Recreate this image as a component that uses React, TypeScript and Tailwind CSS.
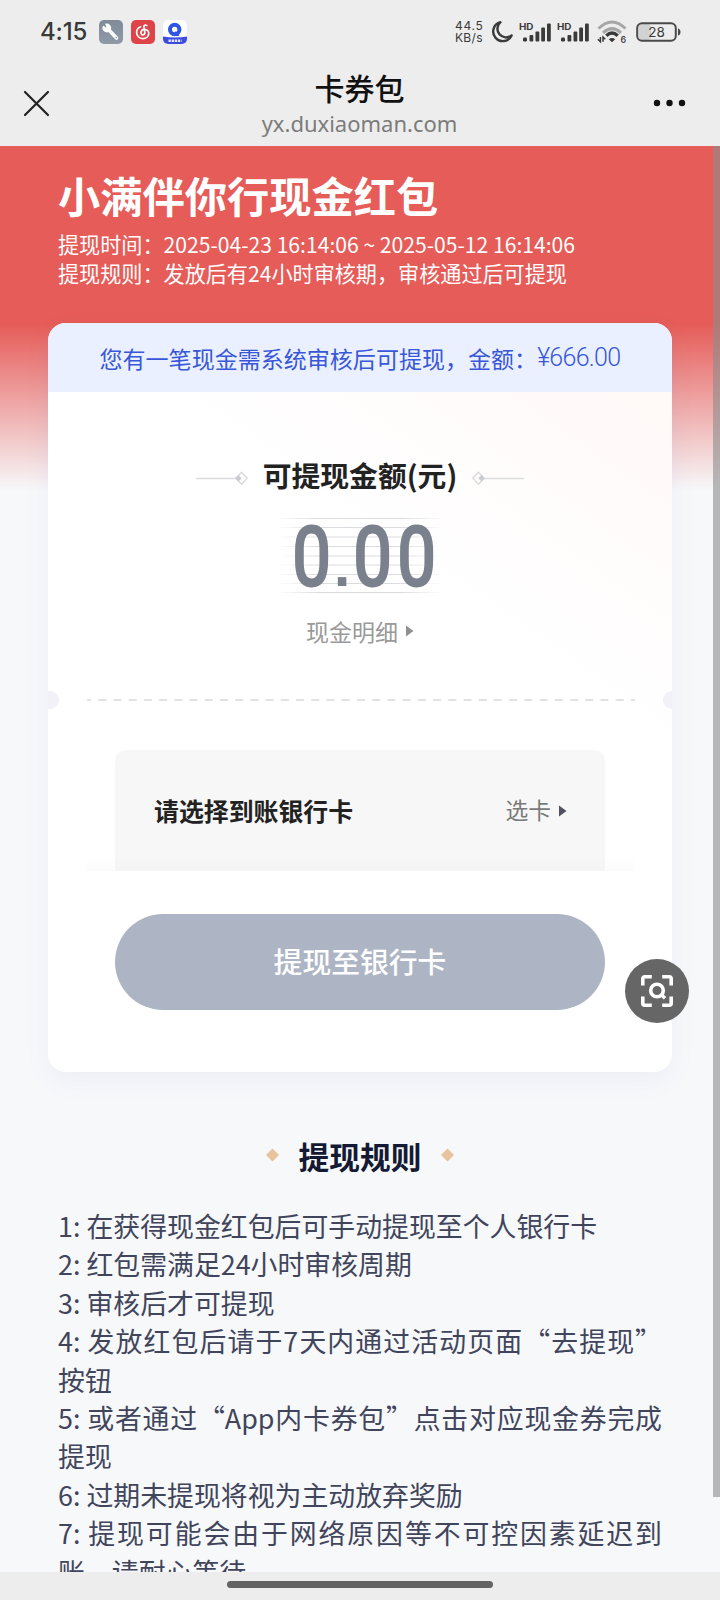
import React from "react";

const CJK = "font-['Noto_Sans_CJK_SC',sans-serif]";

function WrenchIcon() {
  return (
    <svg width="24" height="24" viewBox="0 0 24 24">
      <defs>
        <linearGradient id="wr" x1="0" y1="0" x2="0" y2="1">
          <stop offset="0" stopColor="#7f8b98" />
          <stop offset="1" stopColor="#8f9aa8" />
        </linearGradient>
      </defs>
      <rect width="24" height="24" rx="5" fill="url(#wr)" />
      <path d="M8.5 8.5 17.5 18" stroke="#fff" strokeWidth="3.6" strokeLinecap="round" />
      <circle cx="7.8" cy="8" r="4.4" fill="#fff" />
      <path d="M7.6 7.8 3.2 5 5.6 2.4Z" fill="#828e9b" />
      <circle cx="17.3" cy="17.6" r="0.8" fill="#8f9aa8" />
    </svg>
  );
}

function MusicIcon() {
  return (
    <svg width="24" height="24" viewBox="0 0 24 24">
      <rect width="24" height="24" rx="5" fill="#dd4347" />
      <path
        d="M15.800 5.600c-1.500-1.100-3.200-.4-2.900 1.500l.9 5c.3 1.800-.8 2.800-2 2.700-1.400-.1-2.100-1.300-1.800-2.700.5-2 2.500-3 4.400-2.600 2.400.6 3.600 2.500 3.300 4.600-.4 2.800-2.900 4.600-5.800 4.500-3.600-.1-6.400-2.700-6.300-6.300.1-2.600 1.600-4.600 4-5.500"
        fill="none"
        stroke="#fff"
        strokeWidth="1.700"
        strokeLinecap="round"
      />
    </svg>
  );
}

function BrowserIcon() {
  return (
    <svg width="24" height="24" viewBox="0 0 24 24">
      <defs>
        <clipPath id="br">
          <rect width="24" height="24" rx="5" />
        </clipPath>
      </defs>
      <g clipPath="url(#br)">
        <rect width="24" height="24" fill="#fff" />
        <path d="M0 16.500Q12 18.500 24 16.500V24H0Z" fill="#3b4ce0" />
        <circle cx="11.700" cy="9.500" r="4.700" fill="none" stroke="#2f55e6" strokeWidth="4" />
        <path d="M12 11l4.500 5H12Z" fill="#2f55e6" />
        <path d="M5.500 20.700h13" stroke="#fff" strokeWidth="2.600" strokeDasharray="2.400 .7" opacity=".85" />
      </g>
    </svg>
  );
}

function Signal() {
  return (
    <svg width="33" height="24" viewBox="0 -2 33 24">
      <text x="0" y="7.600" fontSize="8.600" fontWeight="700" fill="#3a3a3a" textLength="14.500" lengthAdjust="spacingAndGlyphs" fontFamily="Inter, sans-serif">HD</text>
      <g fill="#3a3a3a">
        <rect x="4" y="15.500" width="4" height="4" rx="1.200" />
        <rect x="10.500" y="13" width="3.800" height="6.500" rx="1" />
        <rect x="16.500" y="9.500" width="3.800" height="10" rx="1" />
        <rect x="22.200" y="5.500" width="3.800" height="14" rx="1" />
        <rect x="28" y="1.500" width="3.800" height="18" rx="1" />
      </g>
    </svg>
  );
}

function Wifi() {
  return (
    <svg width="30" height="24" viewBox="0 0 30 24">
      <g fill="none" strokeWidth="3">
        <path d="M1.500 8.500Q15-4.500 28.500 8.500" stroke="#a6a6a6" />
        <path d="M6 12.800Q15 4.500 24 12.800" stroke="#a6a6a6" />
        <path d="M9.300 15.800Q15 10.200 20.700 15.800" stroke="#3a3a3a" strokeWidth="3.400" />
      </g>
      <path d="M11.800 19.300Q15 16.800 18.200 19.300L15 22.200Z" fill="#3a3a3a" />
      <path d="M3.400 17v4.700L.8 19.300M6 21.700V17l2.300 2.200" stroke="#3a3a3a" strokeWidth="1.500" fill="none" />
      <text x="23.500" y="22.500" fontSize="9" fontWeight="500" fill="#3a3a3a" fontFamily="Inter, sans-serif">6</text>
    </svg>
  );
}

function StatusBar() {
  return (
    <div className="flex h-[63px] items-center pl-[40px] pr-[38px] text-[#3a3a3a]">
      <span className="w-[59px] font-['Inter',sans-serif] text-[24px] font-medium leading-none tracking-[-0.2px]">4:15</span>
      <div className="flex gap-2">
        <WrenchIcon />
        <MusicIcon />
        <BrowserIcon />
      </div>
      <div className="ml-auto flex items-center">
        <div className="w-[35px] font-['Inter',sans-serif] text-[12px] leading-[12px]">
          <div className="tracking-[0.700px]">44.5</div>
          <div className="tracking-[0.300px]">KB/s</div>
        </div>
        <svg width="24" height="24" viewBox="0 0 24 24" className="mr-[5px]">
          <path d="M10.500 2.200A9.600 9.600 0 1 0 21.600 15.400 8.600 8.600 0 0 1 10.500 2.200Z" fill="none" stroke="#3a3a3a" strokeWidth="2.400" strokeLinejoin="round" />
        </svg>
        <div className="mr-[7px] flex gap-[5px]">
          <Signal />
          <Signal />
        </div>
        <Wifi />
        <svg width="46" height="20" viewBox="0 0 46 20" className="ml-[9px]">
          <rect x="3" y="2" width="12" height="16" rx="3" fill="#d2d2d2" />
          <rect x="1.200" y="1.200" width="38.600" height="17.600" rx="4.800" fill="none" stroke="#4a4a4a" strokeWidth="2" />
          <path d="M42 6.500v7q2.500-.5 2.500-3.500T42 6.500Z" fill="#4a4a4a" />
          <text x="20.500" y="14.800" textAnchor="middle" fontSize="13.500" fill="#3a3a3a" fontFamily="Inter, sans-serif">28</text>
        </svg>
      </div>
    </div>
  );
}

function TitleBar() {
  return (
    <div className="flex h-[83px] items-start justify-between pl-[23px] pr-[34px]">
      <svg width="27" height="27" viewBox="0 0 27 27" className="mt-[27px]">
        <path d="M2 2 25 25M25 2 2 25" stroke="#222" strokeWidth="2.200" strokeLinecap="round" />
      </svg>
      <div className="flex flex-col items-center pl-[16px]">
        <div className="mt-[6px] text-[30px] font-medium leading-[36px] text-[#111]">卡券包</div>
        <div className="mt-[4px] font-['Noto_Sans',sans-serif] text-[22px] leading-[28px] text-[#7c7c7c]">yx.duxiaoman.com</div>
      </div>
      <svg width="33" height="8" viewBox="0 0 33 8" className="mt-[36px]">
        <circle cx="4" cy="4" r="3.200" fill="#111" />
        <circle cx="16.500" cy="4" r="3.200" fill="#111" />
        <circle cx="29" cy="4" r="3.200" fill="#111" />
      </svg>
    </div>
  );
}

function LineDiamond({ flip = false }: { flip?: boolean }) {
  return (
    <svg width="52" height="16" viewBox="0 0 52 16" className={flip ? "mt-[4px] -scale-x-100" : "mt-[4px]"}>
      <path d="M0 8.500H42" stroke="#dcdce0" strokeWidth="1.400" />
      <path d="M45.500 2.200 51.200 8.200 45.500 14.200 39.800 8.200Z" fill="none" stroke="#dadade" strokeWidth="1.400" />
      <path d="M42.500 5 45.800 8.300 42.500 11.600 39.200 8.300Z" fill="#cbccd1" />
    </svg>
  );
}

function Amount() {
  const lines = [20, 29, 38.5, 48, 57.5, 66.500, 76, 85, 94];
  return (
    <svg width="166" height="120" viewBox="0 0 166 120">
      <defs>
        <linearGradient id="ln" x1="0" x2="1" y1="0" y2="0">
          <stop offset="0" stopColor="#cfd0d4" stopOpacity="0" />
          <stop offset=".25" stopColor="#cfd0d4" stopOpacity=".75" />
          <stop offset=".75" stopColor="#cfd0d4" stopOpacity=".75" />
          <stop offset="1" stopColor="#cfd0d4" stopOpacity="0" />
        </linearGradient>
      </defs>
      {lines.map((y) => (
        <rect key={y} x="0" y={y} width="166" height="1" fill="url(#ln)" />
      ))}
      <g fill="#7b808d" stroke="#7b808d" fontFamily="Roboto, sans-serif" fontWeight="400" textAnchor="middle" fontSize="82">
        <text strokeWidth="3" transform="translate(34.500 86.500) scale(.83 1)">0</text>
        <text stroke="none" fontFamily="Liberation Sans, sans-serif" fontWeight="700" fontSize="60" transform="translate(65 87.500)">.</text>
        <text strokeWidth="3" transform="translate(95.700 86.500) scale(.83 1)">0</text>
        <text strokeWidth="3" transform="translate(139.600 86.500) scale(.83 1)">0</text>
      </g>
    </svg>
  );
}

function Triangle({ className }: { className: string }) {
  return (
    <svg width="8" height="12" viewBox="0 0 8 12" className={className}>
      <path d="M0 .5 7.500 6 0 11.500Z" fill="currentColor" />
    </svg>
  );
}

function Card() {
  return (
    <div className="mx-12 h-[749px] overflow-hidden rounded-[18px] bg-white bg-[linear-gradient(215deg,#fff7f6_0%,#ffffff_36%)] shadow-[0_8px_24px_rgba(90,110,200,0.07)]">
      <div className="flex h-[69px] items-center justify-center bg-[#eaf0ff] pt-[1px] text-[23.040px] text-[#3857d8]">
        <span>您有一笔现金需系统审核后可提现，金额：</span>
        <span className="font-['Roboto',sans-serif] text-[25px] font-[350] tracking-[-0.700px]">¥666.00</span>
      </div>
      <div className="flex h-[104px] items-end justify-center">
        <div className="flex h-[40px] items-center gap-[15px]">
          <LineDiamond />
          <span className="-mt-[2px] text-[28.800px] font-bold leading-[40px] text-[#222]">可提现金额(元)</span>
          <LineDiamond flip />
        </div>
      </div>
      <div className="mt-[2px] flex justify-center">
        <Amount />
      </div>
      <div className="-mt-[5px] flex h-[36px] items-center justify-center gap-[8px] text-[23.040px] text-[#999]">
        现金明细
        <Triangle className="text-[#909090]" />
      </div>
      <div className="mt-[42px] flex h-[18px] items-center justify-between">
        <div className="h-[18px] w-[11px] rounded-r-[9px] bg-[#f1f1f7]" />
        <svg width="548" height="2" viewBox="0 0 548 2">
          <path d="M0 1H548" stroke="#d9d9d9" strokeWidth="1.300" strokeDasharray="8 7.220" strokeDashoffset="4" />
        </svg>
        <div className="h-[18px] w-[9px] rounded-l-[9px] bg-[#f1f1f7]" />
      </div>
      <div className="mx-[38px] mt-[41px] h-[121px] bg-[linear-gradient(to_bottom,transparent_90%,#fbfbfb_100%)] px-[29px]">
        <div className="flex h-full items-center justify-between rounded-t-[11px] bg-[linear-gradient(to_bottom,#f7f7f7_88%,#f4f4f4_100%)] pl-[39px] pr-[38px]">
          <span className="text-[24.900px] font-bold text-[#222]">请选择到账银行卡</span>
          <span className="flex items-center gap-[8px] text-[22.800px] text-[#7a7a7a]">
            选卡
            <Triangle className="text-[#50535f]" />
          </span>
        </div>
      </div>
      <div className="mx-[67px] mt-[43px] flex h-[96px] items-center justify-center rounded-full bg-[#adb5c4] pb-[2px] text-[28.800px] font-medium text-white">提现至银行卡</div>
    </div>
  );
}

const rules = [
  "1: 在获得现金红包后可手动提现至个人银行卡",
  "2: 红包需满足24小时审核周期",
  "3: 审核后才可提现",
  "4: 发放红包后请于7天内通过活动页面“去提现”按钮",
  "5: 或者通过“App内卡券包”点击对应现金券完成提现",
  "6: 过期未提现将视为主动放弃奖励",
  "7: 提现可能会由于网络原因等不可控因素延迟到账，请耐心等待",
];

function Diamond() {
  return (
    <svg width="13" height="14" viewBox="0 0 13 14" className="-mt-[3px]">
      <path d="M6.500.5 13 7 6.500 13.500 0 7Z" fill="#e8c39e" />
    </svg>
  );
}

export default function App() {
  return (
    <div lang="zh-CN" className={`relative flex h-[1600px] w-[720px] flex-col overflow-hidden bg-[#ededed] ${CJK}`}>
      <StatusBar />
      <TitleBar />
      <main className="h-[1426px] shrink-0 overflow-hidden bg-[#f7f8fa] bg-[linear-gradient(to_bottom,#e65c58_0px,#e65c58_178px,#f7f8fa_344px)]">
        <div className="h-[177px] pl-[58px] pt-[22px] text-white">
          <h1 className="text-[42.240px] font-bold leading-[54px]">小满伴你行现金红包</h1>
          <div className="mt-[8px] text-[21.120px] leading-[28.600px]">
            <p>提现时间：2025-04-23 16:14:06 ~ 2025-05-12 16:14:06</p>
            <p>提现规则：发放后有24小时审核期，审核通过后可提现</p>
          </div>
        </div>
        <Card />
        <div className="mt-[61px] flex h-[46px] items-center justify-center gap-[20px]">
          <Diamond />
          <h2 className="text-[30.720px] font-bold leading-[46px] text-[#141a33]">提现规则</h2>
          <Diamond />
        </div>
        <ol className="ml-[58px] mt-[28px] w-[604px] text-justify text-[26.880px] leading-[38.400px] text-[#41455c]">
          {rules.map((rule) => (
            <li key={rule}>{rule}</li>
          ))}
        </ol>
      </main>
      <div className="flex h-[28px] justify-center pt-[9px]">
        <div className="h-[7px] w-[266px] rounded-full bg-[#636363]" />
      </div>
      <div className="absolute right-0 top-[146px] h-[1351px] w-[7px] bg-[#8c8c8c]/60" />
      <div className="absolute left-[625px] top-[959px] flex h-16 w-16 items-center justify-center rounded-full bg-[#666]">
        <svg width="32" height="32" viewBox="0 0 32 32" fill="none" stroke="#fff" strokeWidth="3.600">
          <path d="M1.800 10.500V3.800a2 2 0 0 1 2-2h7M21.200 1.800h7a2 2 0 0 1 2 2v6.700M30.200 21.500v6.700a2 2 0 0 1-2 2h-7M10.800 30.200h-7a2 2 0 0 1-2-2v-6.700" />
          <circle cx="16" cy="15.500" r="6.300" />
          <path d="M20 19.500 24 23.300" />
        </svg>
      </div>
    </div>
  );
}
